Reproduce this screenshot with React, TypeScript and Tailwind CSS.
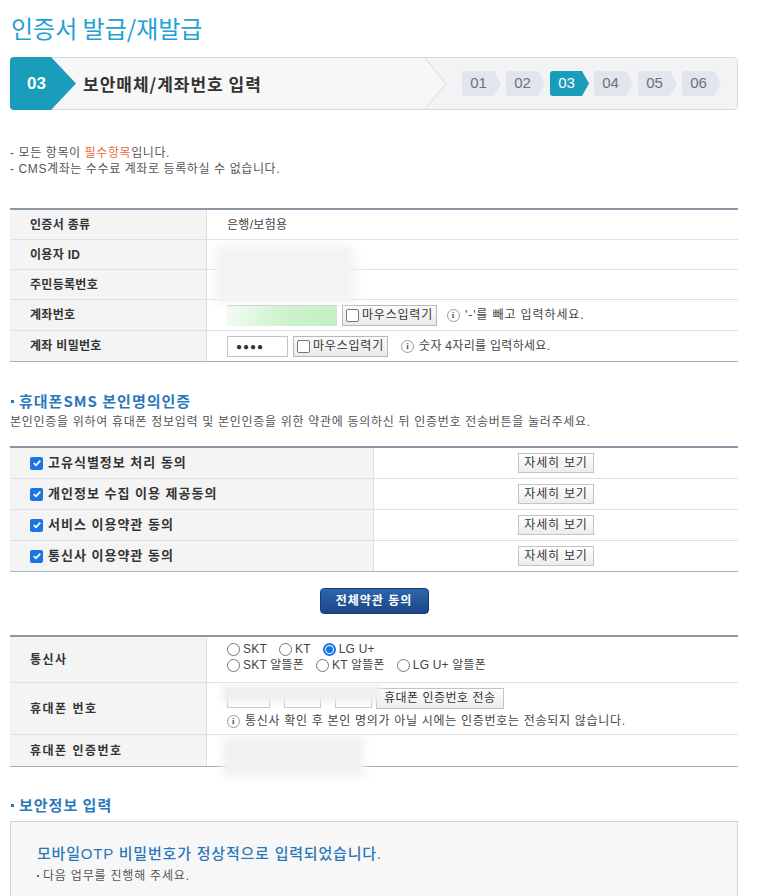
import React from 'react';

const font = "font-['Liberation_Sans','Noto_Sans_CJK_KR',sans-serif]";

function Info() {
  return (
    <span className="inline-flex w-[13px] h-[13px] rounded-full border border-[#9a9a9a] items-center justify-center text-[9px] font-bold text-[#555] font-['Liberation_Serif',serif] leading-none shrink-0">
      i
    </span>
  );
}

function MouseBtn() {
  return (
    <span className="inline-flex items-center gap-[3px] h-[21px] px-[3px] border border-[#b8b8b8] bg-linear-to-b from-[#fbfbfb] to-[#e9e9e9] text-[12px] text-[#333] tracking-[0.8px]">
      <span className="w-[13px] h-[13px] border border-[#777] rounded-[2px] bg-white" />
      마우스입력기
    </span>
  );
}

function Check() {
  return (
    <span className="inline-flex w-[13px] h-[13px] rounded-[2px] bg-[#1b74e4] items-center justify-center shrink-0">
      <svg width="10" height="10" viewBox="0 0 10 10">
        <path d="M1.8 5.2 L4 7.3 L8.3 2.6" stroke="white" strokeWidth="1.8" fill="none" />
      </svg>
    </span>
  );
}

function Radio({ on, label }: { on?: boolean; label: string }) {
  return (
    <span className="inline-flex items-center gap-[3px]">
      {on ? (
        <span className="w-[13px] h-[13px] rounded-full border-2 border-[#1b74e4] flex items-center justify-center">
          <span className="w-[7px] h-[7px] rounded-full bg-[#1b74e4]" />
        </span>
      ) : (
        <span className="w-[13px] h-[13px] rounded-full border border-[#767676] bg-white" />
      )}
      <span className="tracking-[0.2px]">{label}</span>
    </span>
  );
}

function Chip({ n, active }: { n: string; active?: boolean }) {
  return (
    <div
      className={
        active
          ? 'w-[39px] h-[25px] pr-[6px] flex items-center justify-center bg-[#1a9cbb] text-white text-[15px] rounded-l-[3px] [clip-path:polygon(0_0,32px_0,39px_50%,32px_100%,0_100%)]'
          : 'w-[39px] h-[25px] pr-[6px] flex items-center justify-center bg-[#e2e5ec] text-[#6c7280] text-[15px] rounded-l-[3px] [clip-path:polygon(0_0,32px_0,39px_50%,32px_100%,0_100%)]'
      }
    >
      {n}
    </div>
  );
}

function DetailBtn() {
  return (
    <span className="inline-flex items-center justify-center w-[76px] h-[20px] border border-[#c3c3c3] bg-linear-to-b from-white to-[#ececec] text-[12px] text-[#333] tracking-[0.8px]">
      자세히 보기
    </span>
  );
}

export default function App() {
  const agrees = ['고유식별정보 처리 동의', '개인정보 수집 이용 제공동의', '서비스 이용약관 동의', '통신사 이용약관 동의'];

  return (
    <div className={`${font} w-[773px] h-[896px] overflow-hidden bg-white text-[#555]`}>
      <div className="ml-[10px] w-[728px]">
        {/* title */}
        <div className="h-[57px] pt-[10px]">
          <h1 className="text-[24px] leading-[36px] text-[#23a1d4] font-['Noto_Sans_CJK_KR',sans-serif] ml-[1px]">인증서 발급/재발급</h1>
        </div>

        {/* step bar */}
        <div className="h-[53px] flex items-center border border-[#d6dae0] rounded-[4px] bg-[#f7f7f8]">
          <div className="-ml-px -my-px w-[66px] h-[53px] bg-[#1a9cbb] rounded-l-[4px] flex items-center pl-[17px] text-white text-[17px] font-bold [clip-path:polygon(0_0,41px_0,66px_50%,41px_100%,0_100%)]">
            03
          </div>
          <div className="ml-[7px] text-[17px] font-bold text-[#333] tracking-[1px] font-['Noto_Sans_CJK_KR',sans-serif]">
            보안매체/계좌번호 입력
          </div>
          <div className="ml-auto flex items-center h-full w-[312px] bg-[#f2f3f5] rounded-r-[4px]">
            <svg width="22" height="51" viewBox="0 0 22 51" className="shrink-0">
              <path d="M0 0 L21 25.5 L0 51 Z" fill="#f7f7f8" />
              <path d="M0 0 L21 25.5 L0 51" stroke="#d6dae0" strokeWidth="1" fill="none" />
            </svg>
            <div className="ml-[15px] flex items-center gap-[5px]">
              <Chip n="01" />
              <Chip n="02" />
              <Chip n="03" active />
              <Chip n="04" />
              <Chip n="05" />
              <Chip n="06" />
            </div>
          </div>
        </div>

        {/* notes */}
        <div className="mt-[35px] text-[12px] leading-[16px] text-[#555] tracking-[0.6px]">
          <p>- 모든 항목이 <span className="text-[#ec6b3a]">필수항목</span>입니다.</p>
          <p>- CMS계좌는 수수료 계좌로 등록하실 수 없습니다.</p>
        </div>

        {/* table 1 */}
        <div className="relative mt-[31px] border-t-2 border-[#8e96a3] text-[12px]">
          {[
            { label: '인증서 종류', h: 'h-[30px]' },
            { label: '이용자 ID', h: 'h-[30px]' },
            { label: '주민등록번호', h: 'h-[30px]' },
            { label: '계좌번호', h: 'h-[31px]' },
            { label: '계좌 비밀번호', h: 'h-[31px]' },
          ].map((r, i) => (
            <div key={i} className={`flex ${r.h} border-b ${i === 4 ? 'border-[#aab0b9]' : 'border-[#dde1e6]'}`}>
              <div className="w-[197px] shrink-0 bg-[#f4f4f5] border-r border-[#dde1e6] flex items-center pl-[20px] font-bold text-[#333] tracking-[0.3px]">
                {r.label}
              </div>
              <div className="flex-1 flex items-center pl-[20px] gap-[5px]">
                {i === 0 && <span className="text-[#444] tracking-[0.3px]">은행/보험용</span>}
                {i === 3 && (
                  <>
                    <span className="w-[110px] h-[21px] border-t border-[#c8c8c8] bg-linear-to-r from-[#f3fbf3] via-[#cdf3cd] to-[#c4efc4]" />
                    <MouseBtn />
                    <span className="ml-[5px] inline-flex items-center gap-[5px] text-[#444] tracking-[0.9px]">
                      <Info />
                      &#39;-&#39;를 빼고 입력하세요.
                    </span>
                  </>
                )}
                {i === 4 && (
                  <>
                    <span className="w-[61px] h-[21px] border border-[#c4c4c4] bg-white flex items-center pl-[8px] text-[10px] text-[#333] tracking-[1px]">
                      ●●●●
                    </span>
                    <MouseBtn />
                    <span className="ml-[8px] inline-flex items-center gap-[5px] text-[#444] tracking-[0.3px]">
                      <Info />
                      숫자 4자리를 입력하세요.
                    </span>
                  </>
                )}
              </div>
            </div>
          ))}
          <div className="absolute left-[205px] top-[35px] w-[140px] h-[58px] bg-[#f3f3f3] blur-[5px]" />
        </div>

        {/* SMS section */}
        <div className="mt-[29px] flex items-center gap-[5px] text-[15px] font-bold text-[#2a78bb] leading-[20px] font-['Noto_Sans_CJK_KR',sans-serif]">
          <span className="w-[3px] h-[3px] bg-[#2a78bb] ml-px" />
          <span className="tracking-[1px]">휴대폰SMS 본인명의인증</span>
        </div>
        <p className="mt-[3px] text-[12px] leading-[16px] text-[#555] tracking-[0.7px]">
          본인인증을 위하여 휴대폰 정보입력 및 본인인증을 위한 약관에 동의하신 뒤 인증번호 전송버튼을 눌러주세요.
        </p>

        <div className="mt-[16px] border-t-2 border-[#8e96a3]">
          {agrees.map((a, i) => (
            <div key={i} className={`flex h-[31px] border-b ${i === 3 ? 'border-[#aab0b9]' : 'border-[#dde1e6]'}`}>
              <div className="w-[364px] shrink-0 bg-[#f4f4f5] border-r border-[#dde1e6] flex items-center pl-[20px] gap-[5px]">
                <Check />
                <span className="text-[13px] font-bold text-[#333] tracking-[1px]">{a}</span>
              </div>
              <div className="flex-1 flex items-center justify-center">
                <DetailBtn />
              </div>
            </div>
          ))}
        </div>

        <div className="mt-[16px] flex justify-center">
          <span className="inline-flex items-center justify-center w-[109px] h-[26px] rounded-[4px] border border-[#163f78] bg-linear-to-b from-[#2e66ab] to-[#1b4687] text-white text-[12px] font-bold tracking-[1px]">
            전체약관 동의
          </span>
        </div>

        {/* table 3 */}
        <div className="relative mt-[21px] border-t-2 border-[#8e96a3] text-[12px]">
          <div className="flex h-[46px] border-b border-[#dde1e6]">
            <div className="w-[197px] shrink-0 bg-[#f4f4f5] border-r border-[#dde1e6] flex items-center pl-[20px] font-bold text-[#333] tracking-[1.5px]">
              통신사
            </div>
            <div className="flex-1 pl-[20px] pt-[4px] leading-[16px] text-[#444]">
              <div className="flex gap-[12px]">
                <Radio label="SKT" />
                <Radio label="KT" />
                <Radio on label="LG U+" />
              </div>
              <div className="flex gap-[12px]">
                <Radio label="SKT 알뜰폰" />
                <Radio label="KT 알뜰폰" />
                <Radio label="LG U+ 알뜰폰" />
              </div>
            </div>
          </div>
          <div className="flex h-[52px] border-b border-[#dde1e6]">
            <div className="w-[197px] shrink-0 bg-[#f4f4f5] border-r border-[#dde1e6] flex items-center pl-[20px] font-bold text-[#333] tracking-[1.5px]">
              휴대폰 번호
            </div>
            <div className="flex-1 pl-[20px] pt-[5px]">
              <div className="flex items-center h-[20px]">
                <span className="w-[43px] h-[20px] border border-[#c8c8c8] bg-white" />
                <span className="w-[37px] h-[20px] border border-[#c8c8c8] bg-white ml-[14px]" />
                <span className="w-[37px] h-[20px] border border-[#c8c8c8] bg-white ml-[14px]" />
                <span className="ml-[4px] inline-flex items-center h-[21px] px-[7px] border border-[#c3c3c3] bg-linear-to-b from-white to-[#ececec] text-[#333] tracking-[0.5px]">
                  휴대폰 인증번호 전송
                </span>
              </div>
              <div className="mt-[5px] flex items-center gap-[5px] text-[#444] leading-[16px] tracking-[0.7px]">
                <Info />
                통신사 확인 후 본인 명의가 아닐 시에는 인증번호는 전송되지 않습니다.
              </div>
            </div>
          </div>
          <div className="flex h-[32px] border-b border-[#aab0b9]">
            <div className="w-[197px] shrink-0 bg-[#f4f4f5] border-r border-[#dde1e6] flex items-center pl-[20px] font-bold text-[#333] tracking-[1.5px]">
              휴대폰 인증번호
            </div>
            <div className="flex-1" />
          </div>
          <div className="absolute left-[212px] top-[48px] w-[160px] h-[17px] bg-[#f0f0f0] blur-[3px]" />
          <div className="absolute left-[212px] top-[100px] w-[142px] h-[40px] bg-[#f1f1f1] blur-[4px]" />
        </div>

        {/* security */}
        <div className="mt-[28px] flex items-center gap-[5px] text-[15px] font-bold text-[#2a78bb] leading-[20px] font-['Noto_Sans_CJK_KR',sans-serif]">
          <span className="w-[3px] h-[3px] bg-[#2a78bb] ml-px" />
          <span className="tracking-[1px]">보안정보 입력</span>
        </div>
        <div className="mt-[6px] h-[120px] border border-[#d0d0d0] bg-[#f7f7f7] pl-[26px] pt-[21px]">
          <p className="text-[15px] leading-[22px] text-[#2a78bb] tracking-[0.8px] font-medium">
            모바일OTP 비밀번호가 정상적으로 입력되었습니다.
          </p>
          <p className="mt-[3px] text-[12px] leading-[16px] text-[#555] flex items-center gap-[4px] tracking-[0.8px]">
            <span className="w-[2px] h-[2px] bg-[#666]" />
            다음 업무를 진행해 주세요.
          </p>
        </div>
      </div>
    </div>
  );
}
